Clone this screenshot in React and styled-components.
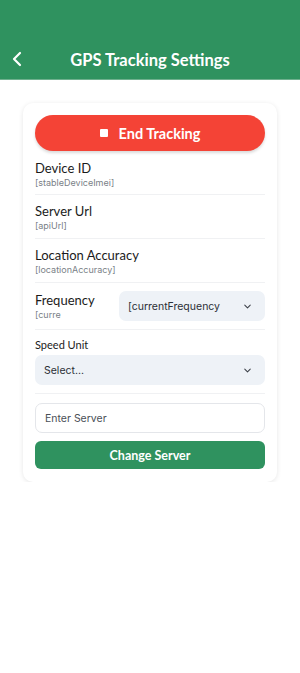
import React from "react";
import styled, { createGlobalStyle } from "styled-components";

const GlobalStyle = createGlobalStyle`
  body {
    margin: 0;
    background: #ffffff;
    font-family: "Lato", "Inter", sans-serif;
  }
`;

const Header = styled.header`
  height: 80px;
  background: #2f925f;
  border-bottom: 1px solid #6fb08e;
  display: flex;
  align-items: flex-end;
  justify-content: center;
  position: relative;
  padding-bottom: 9px;
  box-sizing: border-box;
`;

const BackButton = styled.button`
  position: absolute;
  left: 8px;
  bottom: 11px;
  background: none;
  border: 0;
  padding: 0;
  width: 18px;
  height: 18px;
  display: flex;
  align-items: center;
  justify-content: center;
`;

const Title = styled.h1`
  margin: 0;
  color: #ffffff;
  font-family: "Lato", sans-serif;
  font-weight: 700;
  font-size: 16.5px;
  line-height: 20px;
`;

const Card = styled.div`
  margin: 23px 23px 0 23px;
  background: #ffffff;
  border-radius: 10px;
  box-shadow: 0 1px 5px rgba(0, 0, 0, 0.1);
  padding: 12px 12px 13px 12px;
  display: flex;
  flex-direction: column;
`;

const EndButton = styled.button`
  height: 36px;
  border: 0;
  border-radius: 18px;
  background: #f44336;
  box-shadow: 0 2px 3px rgba(0, 0, 0, 0.15);
  color: #ffffff;
  font-family: "Lato", sans-serif;
  font-weight: 700;
  font-size: 14.5px;
  display: flex;
  align-items: center;
  justify-content: center;
  gap: 11px;
`;

const StopIcon = styled.span`
  width: 8px;
  height: 8px;
  background: #ffffff;
  border-radius: 1px;
`;

const Field = styled.div`
  display: flex;
  align-items: center;
  justify-content: space-between;
  padding: ${(p) => p.$pad || "8px 0 7px"};
  border-bottom: 1px solid #f0f1f3;
`;

const FieldStack = styled.div`
  padding: 8px 0 8px;
  border-bottom: 1px solid #f0f1f3;
  display: flex;
  flex-direction: column;
  gap: 3px;
`;

const Label = styled.div`
  font-family: "Lato", sans-serif;
  font-size: 13px;
  color: #1b1b1b;
  line-height: 16px;
`;

const SmallLabel = styled(Label)`
  font-size: 11px;
  line-height: 14px;
`;

const Value = styled.div`
  font-family: "Inter", sans-serif;
  font-size: 9px;
  color: #7a7f87;
  line-height: 11px;
  margin-top: 1px;
`;

const Select = styled.div`
  flex: ${(p) => (p.$wide ? "none" : "0 0 146px")};
  height: 30px;
  border-radius: 7px;
  background: #eef2f7;
  display: flex;
  align-items: center;
  justify-content: space-between;
  padding: 0 12px 0 9px;
  box-sizing: border-box;
  font-family: "Inter", sans-serif;
  font-size: 10.5px;
  color: #2b2f36;
`;

const Input = styled.input`
  box-sizing: border-box;
  height: 30px;
  margin-top: 9px;
  border: 1px solid #e4e6ea;
  border-radius: 7px;
  padding: 0 9px;
  font-family: "Inter", sans-serif;
  font-size: 10.5px;
  color: #2b2f36;
  outline: none;
  &::placeholder {
    color: #4a4f57;
  }
`;

const ChangeButton = styled.button`
  height: 28px;
  margin-top: 8px;
  border: 0;
  border-radius: 6px;
  background: #2f925f;
  color: #ffffff;
  font-family: "Lato", sans-serif;
  font-weight: 700;
  font-size: 12.5px;
`;

const Chevron = () => (
  <svg width="11" height="11" viewBox="0 0 24 24" fill="none" stroke="#3a3f47" strokeWidth="2.2" strokeLinecap="round" strokeLinejoin="round">
    <path d="M6 9l6 6 6-6" />
  </svg>
);

export default function App() {
  return (
    <>
      <GlobalStyle />
      <Header>
        <BackButton aria-label="Back">
          <svg width="14" height="16" viewBox="0 0 14 16" fill="none" stroke="#ffffff" strokeWidth="2.2" strokeLinecap="round" strokeLinejoin="round">
            <path d="M10 2L4 8l6 6" />
          </svg>
        </BackButton>
        <Title>GPS Tracking Settings</Title>
      </Header>
      <Card>
        <EndButton>
          <StopIcon />
          End Tracking
        </EndButton>
        <Field $pad="9px 0 6px">
          <div>
            <Label>Device ID</Label>
            <Value>[stableDeviceImei]</Value>
          </div>
        </Field>
        <Field>
          <div>
            <Label>Server Url</Label>
            <Value>[apiUrl]</Value>
          </div>
        </Field>
        <Field>
          <div>
            <Label>Location Accuracy</Label>
            <Value>[locationAccuracy]</Value>
          </div>
        </Field>
        <Field $pad="8px 0 8px">
          <div>
            <Label>Frequency</Label>
            <Value>[curre</Value>
          </div>
          <Select>
            <span>[currentFrequency</span>
            <Chevron />
          </Select>
        </Field>
        <FieldStack>
          <SmallLabel>Speed Unit</SmallLabel>
          <Select $wide>
            <span>Select...</span>
            <Chevron />
          </Select>
        </FieldStack>
        <Input placeholder="Enter Server" />
        <ChangeButton>Change Server</ChangeButton>
      </Card>
    </>
  );
}
